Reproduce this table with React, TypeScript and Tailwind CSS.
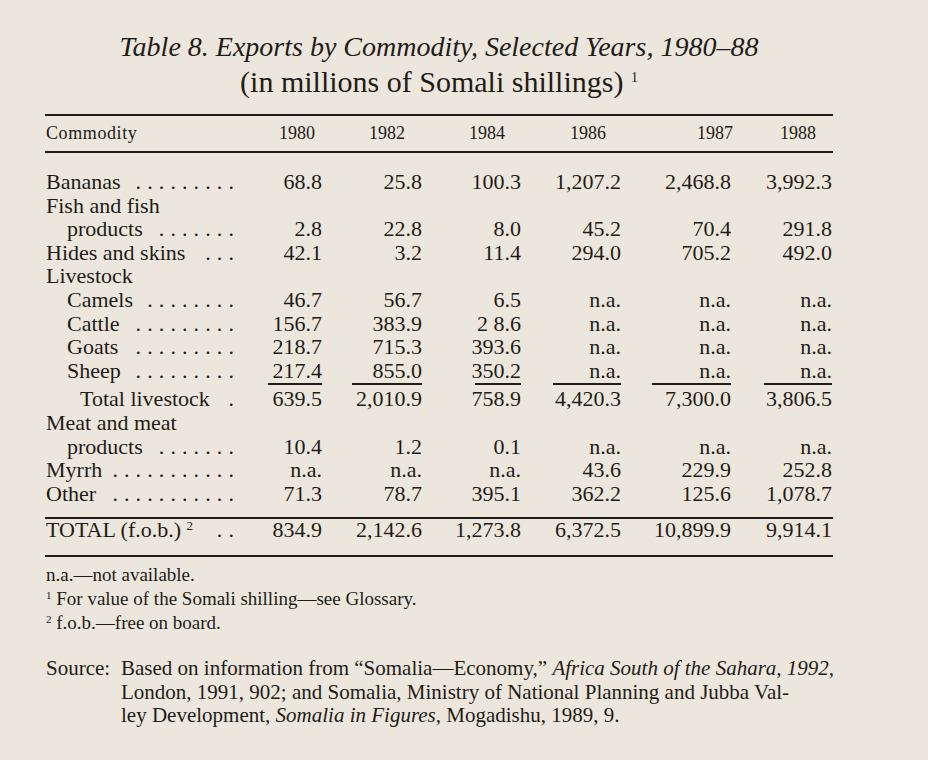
const YEARS = ["1980", "1982", "1984", "1986", "1987", "1988"];

// right padding for each header year, the years don't line up with the figures
const HEAD_PAD = ["pr-[7px]", "pr-[17px]", "pr-[16px]", "pr-[15px]", "-mr-[2px]", "pr-[16px]"];

// width of the rule under the Sheep figures
const SUB_RULE = ["w-[54px]", "w-[70px]", "w-[46px]", "w-[68px]", "w-[79px]", "w-[68px]"];

type Row = {
  label: string;
  indent?: 0 | 1 | 2;
  dots?: number;
  values?: string[];
};

const LIVESTOCK: Row[] = [
  { label: "Bananas", dots: 9, values: ["68.8", "25.8", "100.3", "1,207.2", "2,468.8", "3,992.3"] },
  { label: "Fish and fish" },
  { label: "products", indent: 1, dots: 7, values: ["2.8", "22.8", "8.0", "45.2", "70.4", "291.8"] },
  { label: "Hides and skins", dots: 3, values: ["42.1", "3.2", "11.4", "294.0", "705.2", "492.0"] },
  { label: "Livestock" },
  { label: "Camels", indent: 1, dots: 8, values: ["46.7", "56.7", "6.5", "n.a.", "n.a.", "n.a."] },
  { label: "Cattle", indent: 1, dots: 9, values: ["156.7", "383.9", "2 8.6", "n.a.", "n.a.", "n.a."] },
  { label: "Goats", indent: 1, dots: 9, values: ["218.7", "715.3", "393.6", "n.a.", "n.a.", "n.a."] },
  { label: "Sheep", indent: 1, dots: 9, values: ["217.4", "855.0", "350.2", "n.a.", "n.a.", "n.a."] },
];

const REST: Row[] = [
  { label: "Total livestock", indent: 2, dots: 1, values: ["639.5", "2,010.9", "758.9", "4,420.3", "7,300.0", "3,806.5"] },
  { label: "Meat and meat" },
  { label: "products", indent: 1, dots: 7, values: ["10.4", "1.2", "0.1", "n.a.", "n.a.", "n.a."] },
  { label: "Myrrh", dots: 11, values: ["n.a.", "n.a.", "n.a.", "43.6", "229.9", "252.8"] },
  { label: "Other", dots: 11, values: ["71.3", "78.7", "395.1", "362.2", "125.6", "1,078.7"] },
];

const TOTAL = ["834.9", "2,142.6", "1,273.8", "6,372.5", "10,899.9", "9,914.1"];

const GRID = "grid grid-cols-[195px_82px_100px_99px_100px_110px_101px]";

function Leader({ count }: { count: number }) {
  return <span className="whitespace-nowrap tracking-[6.1px]">{".".repeat(count)}</span>;
}

// small raised note number
function Note({ n, size = "text-[11px]", lift = "-top-[6px]" }: { n: string; size?: string; lift?: string }) {
  return <span className={`relative leading-none ${size} ${lift}`}>{n}</span>;
}

function BodyRow({ row }: { row: Row }) {
  const indent = row.indent === 2 ? "pl-[35px]" : row.indent === 1 ? "pl-[22px]" : "pl-px";
  return (
    <div className={`${GRID} h-[23.6px] leading-[23.6px]`}>
      <div className={`flex justify-between ${indent}`}>
        <span className="whitespace-nowrap">{row.label}</span>
        {row.dots ? <Leader count={row.dots} /> : null}
      </div>
      {YEARS.map((y, i) => (
        <div key={y} className="text-right whitespace-nowrap">
          {row.values ? row.values[i] : ""}
        </div>
      ))}
    </div>
  );
}

function Rule({ className = "" }: { className?: string }) {
  return <div className={`h-[2px] bg-[#1f1c19] ${className}`} />;
}

export default function App() {
  return (
    <div className="min-h-screen w-full bg-[#ece6dc] text-[#1f1c19] font-['Liberation_Serif',serif] pt-[30px]">
      <div className="ml-[45px] w-[788px]">
        {/* caption */}
        <div className="text-center">
          <p className="italic text-[28px] leading-[34px]">
            Table 8. Exports by Commodity, Selected Years, 1980–88
          </p>
          <p className="text-[30px] leading-[36px]">
            (in millions of Somali shillings) <Note n="1" size="text-[14px]" lift="-top-[10px]" />
          </p>
        </div>

        <Rule className="mt-[14px]" />
        <div className={`${GRID} mt-[6px] text-[18px] leading-[22px]`}>
          <div className="pl-px tracking-[0.6px]">Commodity</div>
          {YEARS.map((y, i) => (
            <div key={y} className={`text-right ${HEAD_PAD[i]}`}>
              {y}
            </div>
          ))}
        </div>
        <Rule className="mt-[7px]" />

        <div className="mt-[17px] text-[22px]">
          {LIVESTOCK.map((r, i) => (
            <BodyRow key={i} row={r} />
          ))}
          <div className={`${GRID} h-[5px]`}>
            <div />
            {SUB_RULE.map((w, i) => (
              <div key={i} className="flex justify-end pt-px">
                <div className={`h-[1.5px] bg-[#1f1c19] ${w}`} />
              </div>
            ))}
          </div>
          {REST.map((r, i) => (
            <BodyRow key={i} row={r} />
          ))}
        </div>

        <Rule className="mt-[12px]" />
        <div className={`${GRID} pt-[2px] text-[22px] leading-[18px]`}>
          <div className="flex justify-between pl-px">
            <span className="whitespace-nowrap">
              TOTAL (f.o.b.) <Note n="2" size="text-[13px]" lift="-top-[7px]" />
            </span>
            <Leader count={2} />
          </div>
          {TOTAL.map((v) => (
            <div key={v} className="text-right whitespace-nowrap">
              {v}
            </div>
          ))}
        </div>
        <Rule className="mt-[16px]" />

        {/* notes */}
        <div className="mt-[6px] text-[19px] leading-[24px] pl-px">
          <p>n.a.—not available.</p>
          <p>
            <Note n="1" /> For value of the Somali shilling—see Glossary.
          </p>
          <p>
            <Note n="2" /> f.o.b.—free on board.
          </p>
        </div>

        <div className="mt-[22px] flex text-[21px] leading-[23.5px] pl-px">
          <span className="w-[75px] shrink-0">Source:</span>
          <p className="whitespace-nowrap">
            Based on information from “Somalia—Economy,” <i>Africa South of the Sahara, 1992,</i>
            <br />
            London, 1991, 902; and Somalia, Ministry of National Planning and Jubba Val-
            <br />
            ley Development, <i>Somalia in Figures,</i> Mogadishu, 1989, 9.
          </p>
        </div>
      </div>
    </div>
  );
}
